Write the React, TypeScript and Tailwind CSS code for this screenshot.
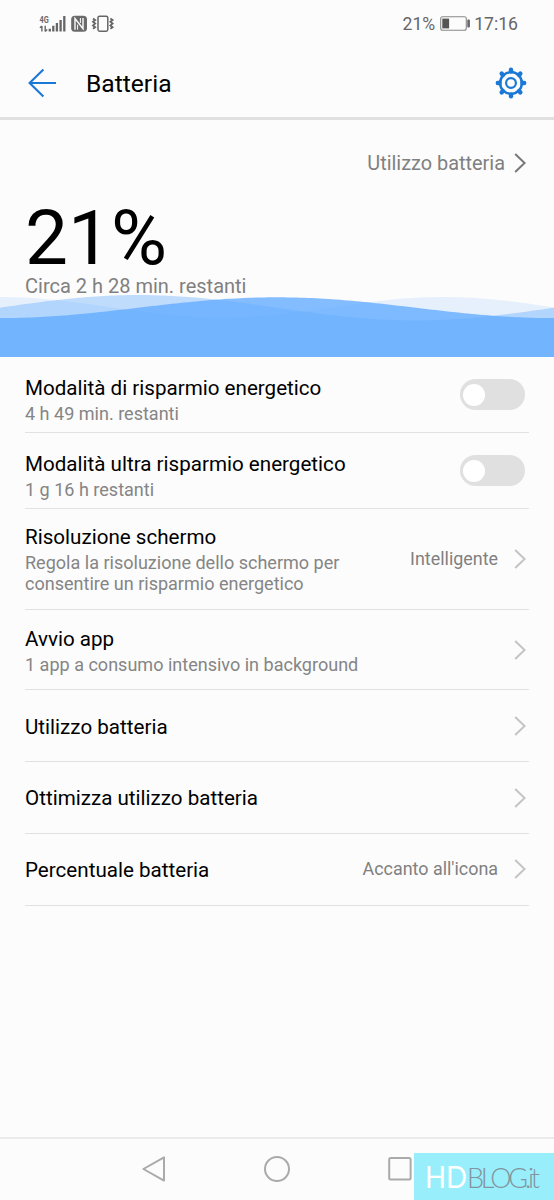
const settings = [
  {
    title: "Modalità di risparmio energetico",
    detail: "4 h 49 min. restanti",
    toggle: true,
    size: "h-[76px]",
    offset: "pt-[10px]",
  },
  {
    title: "Modalità ultra risparmio energetico",
    detail: "1 g 16 h restanti",
    toggle: true,
    size: "h-[76px]",
    offset: "pt-[10px]",
  },
  {
    title: "Risoluzione schermo",
    detail: "Regola la risoluzione dello schermo per consentire un risparmio energetico",
    value: "Intelligente",
    size: "h-[101px]",
  },
  {
    title: "Avvio app",
    detail: "1 app a consumo intensivo in background",
    size: "h-[80px]",
    offset: "pt-px",
  },
  { title: "Utilizzo batteria", size: "h-[72px]", offset: "pt-[2px]" },
  { title: "Ottimizza utilizzo batteria", size: "h-[72px]", offset: "pt-px" },
  { title: "Percentuale batteria", value: "Accanto all'icona", size: "h-[72px]", offset: "pt-px" },
];

const waves = [
  { period: 443, phase: Math.PI / 2, mid: 13.3, height: 10.3, fill: "#5ea8ff", opacity: 0.14 },
  { period: 554, phase: 0, mid: 13.7, height: 12.7, fill: "#5ea8ff", opacity: 0.38 },
  { period: 554, phase: -Math.PI / 2, mid: 13.7, height: 10.4, fill: "#62aaff", opacity: 0.78 },
];

function wavePath(period: number, phase: number, mid: number, height: number) {
  let d = "M0 63";
  for (let x = 0; x <= 556; x += 4) {
    const y = mid - height * Math.sin((2 * Math.PI * x) / period + phase);
    d += ` L${x} ${y.toFixed(2)}`;
  }
  return d + " V63 Z";
}

function Chevron({ className }: { className: string }) {
  return (
    <svg viewBox="0 0 12 20" className={`h-5 w-3 shrink-0 ${className}`} fill="none">
      <path d="M1.2 1 L10.6 10 L1.2 19" stroke="currentColor" strokeWidth="2" />
    </svg>
  );
}

function StatusBar() {
  return (
    <div className="flex h-[47px] items-center justify-between pr-[36px] pl-[39px] text-[#666]">
      <svg viewBox="0 0 76 18" className="h-[18px] w-[76px]" fill="none">
        <text x="0.6" y="7.8" fontSize="9.5" fontWeight="700" textLength="9.2" lengthAdjust="spacingAndGlyphs" fill="#666">
          4G
        </text>
        <g stroke="#666">
          <path d="M2.9 16.4V11M0.9 12.8L2.9 11M6.2 10.8V16.4M8.2 14.4L6.2 16.4" strokeWidth="1.4" />
          <path d="M10.8 16.5V13.8M14.3 16.5V10.8M17.9 16.5V8M21.6 16.5V5M25.3 16.5V1" strokeWidth="2.3" />
        </g>
        <rect x="32.2" y="0.8" width="15.8" height="16" rx="3.6" fill="#6a6a6a" />
        <path d="M36 14.8V3.6L44 13.8V3" stroke="#fcfcfc" strokeWidth="1.4" />
        <path d="M38.6 14.6V9.6M41.4 3V8" stroke="#fcfcfc" strokeWidth="1" />
        <rect x="59" y="1.2" width="9.8" height="15" rx="1.6" stroke="#666" strokeWidth="1.5" />
        <path
          d="M54 3.4L56.2 5L54 6.8L56.2 8.6L54 10.4L56.2 12.2L54 13.8M71.4 3.4L73.6 5L71.4 6.8L73.6 8.6L71.4 10.4L73.6 12.2L71.4 13.8"
          stroke="#666"
          strokeWidth="1.8"
        />
      </svg>
      <div className="flex items-center">
        <span className="text-[17.6px] leading-6">21%</span>
        <svg viewBox="0 0 31 15" className="mr-[3px] ml-[5px] h-[15px] w-[31px]" fill="none">
          <rect x="0.7" y="0.7" width="25.6" height="13.6" rx="2" stroke="#888" strokeWidth="1.1" />
          <rect x="2.3" y="2.6" width="6.8" height="9.8" fill="#555" />
          <rect x="27.3" y="3.6" width="2.6" height="8" rx="1" fill="#666" />
        </svg>
        <span className="text-[17.6px] leading-6">17:16</span>
      </div>
    </div>
  );
}

function Header() {
  return (
    <header className="flex h-[73px] items-center border-b-[3px] border-[#e0e0e0] pt-[2px] pr-[27px] pl-[28px]">
      <svg viewBox="0 0 30 30" className="h-[30px] w-[30px]" fill="none" stroke="#1a78d6" strokeWidth="2.1">
        <path d="M28 15H1.6M15.4 1.4L1.6 15L15.4 28.6" />
      </svg>
      <h1 className="ml-[28px] pt-[2px] text-[24.6px] leading-8 text-black">Batteria</h1>
      <svg viewBox="0 0 32 32" className="ml-auto h-8 w-8" fill="none" stroke="#1a78d6">
        <circle cx="16" cy="16" r="10.9" strokeWidth="2.5" />
        <circle cx="16" cy="16" r="4.9" strokeWidth="2.2" />
        {[0, 45, 90, 135, 180, 225, 270, 315].map((angle) => (
          <path key={angle} d="M16 4.6V2.8" strokeWidth="4.4" strokeLinecap="round" transform={`rotate(${angle} 16 16)`} />
        ))}
      </svg>
    </header>
  );
}

function Summary() {
  return (
    <section className="flex h-[237px] flex-col">
      <div className="flex h-[86px] shrink-0 items-center justify-end gap-[9px] pr-[28px] text-[19.9px] text-[#808080]">
        <span className="pt-[2px]">Utilizzo batteria</span>
        <Chevron className="text-[#777]" />
      </div>
      <div className="shrink-0 pl-[25px] text-[76.5px] leading-[64px] text-black">21%</div>
      <div className="mt-2 shrink-0 pl-[25px] text-[20px] leading-4 text-[#808080]">Circa 2 h 28 min. restanti</div>
      <svg viewBox="0 0 554 63" className="mt-auto block h-[63px] w-full shrink-0">
        {waves.map((w, i) => (
          <path key={i} d={wavePath(w.period, w.phase, w.mid, w.height)} fill={w.fill} fillOpacity={w.opacity} />
        ))}
      </svg>
    </section>
  );
}

function SettingsList() {
  return (
    <ul className="pr-[25px] pl-[25px]">
      {settings.map((item) => (
        <li key={item.title} className={`flex items-center border-b border-[#e2e2e2] ${item.size}`}>
          <div className={`max-w-[345px] shrink-0 ${item.offset ?? ""}`}>
            <p className="text-[20.6px] leading-[26px] text-black">{item.title}</p>
            {item.detail && (
              <p className="mt-[2px] text-[18.05px] leading-[21px] text-[#858585]">{item.detail}</p>
            )}
          </div>
          {item.toggle ? (
            <div className="mr-[4px] ml-auto flex h-[31px] w-[65px] items-center rounded-full bg-[#e0e0e0] pl-[3px]">
              <span className="h-[22px] w-[22px] rounded-full bg-white" />
            </div>
          ) : (
            <div className="mr-[3px] ml-auto flex items-center gap-[16px]">
              <span className="text-[17.9px] whitespace-nowrap text-[#808080]">{item.value}</span>
              <Chevron className="text-[#c4c4c4]" />
            </div>
          )}
        </li>
      ))}
    </ul>
  );
}

function NavigationBar() {
  return (
    <nav className="mt-auto flex h-[63px] items-center justify-center gap-[97px] border-t-2 border-[#ebebeb] pb-[2px]">
      <svg viewBox="0 0 26 26" className="h-[26px] w-[26px]" fill="none" stroke="#aaa" strokeWidth="2">
        <path d="M23 1.4V24.6L2.4 13Z" strokeLinejoin="round" />
      </svg>
      <svg viewBox="0 0 26 26" className="h-[26px] w-[26px]" fill="none" stroke="#aaa" strokeWidth="2">
        <circle cx="13" cy="13" r="12" />
      </svg>
      <svg viewBox="0 0 26 26" className="h-[26px] w-[26px]" fill="none" stroke="#aaa" strokeWidth="2">
        <rect x="2.2" y="2" width="21.4" height="21.4" rx="1.5" />
      </svg>
    </nav>
  );
}

function Watermark() {
  return (
    <svg viewBox="0 0 140 47" className="absolute right-0 bottom-0 h-[47px] w-[140px] bg-[#98effb] font-['Lato',sans-serif]">
      <text x="11" y="35" fontSize="31.5" fill="#fff" textLength="42" lengthAdjust="spacingAndGlyphs">
        HD
      </text>
      <text x="53" y="35" fontSize="27" fontWeight="300" fill="#82949f" textLength="73" lengthAdjust="spacing">
        BLOG.it
      </text>
    </svg>
  );
}

export default function App() {
  return (
    <main className="relative flex h-[1200px] w-[554px] flex-col overflow-hidden bg-[#fcfcfc] font-['Roboto',sans-serif]">
      <StatusBar />
      <Header />
      <Summary />
      <SettingsList />
      <NavigationBar />
      <Watermark />
    </main>
  );
}
